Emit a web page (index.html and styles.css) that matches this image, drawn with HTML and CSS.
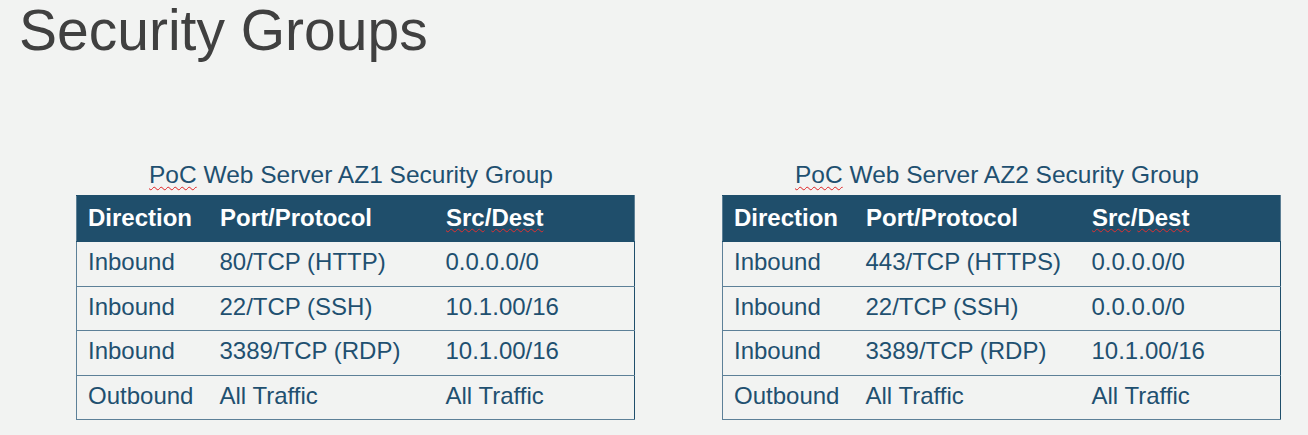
FILE: index.html
```html
<!DOCTYPE html>
<html lang="en">
<head>
<meta charset="utf-8">
<title>Security Groups</title>
<link rel="stylesheet" href="styles.css">
</head>
<body>
<h1 class="title">Security Groups</h1>
<div class="groups">
  <section class="group">
    <div class="caption"><span class="spell">PoC</span> Web Server AZ1 Security Group</div>
    <table class="sg">
      <colgroup><col class="c1"><col class="c2"><col class="c3"></colgroup>
      <thead>
        <tr><th>Direction</th><th>Port/Protocol</th><th><span class="spell">Src</span>/<span class="spell">Dest</span></th></tr>
      </thead>
      <tbody>
        <tr><td>Inbound</td><td>80/TCP (HTTP)</td><td>0.0.0.0/0</td></tr>
        <tr><td>Inbound</td><td>22/TCP (SSH)</td><td>10.1.00/16</td></tr>
        <tr><td>Inbound</td><td>3389/TCP (RDP)</td><td>10.1.00/16</td></tr>
        <tr><td>Outbound</td><td>All Traffic</td><td>All Traffic</td></tr>
      </tbody>
    </table>
  </section>
  <section class="group">
    <div class="caption"><span class="spell">PoC</span> Web Server AZ2 Security Group</div>
    <table class="sg">
      <colgroup><col class="c1"><col class="c2"><col class="c3"></colgroup>
      <thead>
        <tr><th>Direction</th><th>Port/Protocol</th><th><span class="spell">Src</span>/<span class="spell">Dest</span></th></tr>
      </thead>
      <tbody>
        <tr><td>Inbound</td><td>443/TCP (HTTPS)</td><td>0.0.0.0/0</td></tr>
        <tr><td>Inbound</td><td>22/TCP (SSH)</td><td>0.0.0.0/0</td></tr>
        <tr><td>Inbound</td><td>3389/TCP (RDP)</td><td>10.1.00/16</td></tr>
        <tr><td>Outbound</td><td>All Traffic</td><td>All Traffic</td></tr>
      </tbody>
    </table>
  </section>
</div>
</body>
</html>
```
FILE: styles.css
```css
html, body {
  margin: 0;
  padding: 0;
  background: #f2f3f2;
  font-family: "Liberation Sans", Arial, sans-serif;
}
body {
  width: 1308px;
  height: 435px;
  overflow: hidden;
}
.title {
  margin: 2px 0 0 19px;
  font-size: 57px;
  line-height: 56px;
  font-weight: normal;
  color: #404040;
}
.groups {
  display: flex;
  gap: 88px;
  padding-left: 76px;
  margin-top: 105px;
}
.group {
  width: 558px;
}
.caption {
  text-align: center;
  font-size: 24.5px;
  line-height: 24px;
  color: #1f5070;
  margin-bottom: 8px;
  padding-right: 8px;
}
.spell {
  text-decoration: underline wavy #e02020;
  text-decoration-thickness: 1px;
  text-underline-offset: 3px;
  text-decoration-skip-ink: none;
}
.sg {
  width: 558px;
  border-collapse: collapse;
  table-layout: fixed;
  font-size: 24px;
  color: #1f5070;
}
.c1 { width: 132px; }
.c2 { width: 226px; }
.c3 { width: 200px; }
.sg th {
  background: #1f4e6b;
  color: #ffffff;
  font-weight: bold;
  text-align: left;
  height: 44px;
  padding: 0 0 1px 11px;
  border: 1px solid #1f4e6b;
  border-left-color: #5d7f95;
  border-right-color: #5d7f95;
  white-space: nowrap;
}
.sg thead th + th {
  border-left-color: #1f4e6b;
}
.sg thead th:not(:last-child) {
  border-right-color: #1f4e6b;
}
.sg th .spell {
  text-decoration-color: #e03030;
  text-underline-offset: 2px;
}
.sg td {
  height: 40.6px;
  padding: 0 0 3px 11px;
  border-top: 1px solid #5d8098;
  border-bottom: 1px solid #5d8098;
  white-space: nowrap;
}
.sg td:first-child {
  border-left: 1px solid #5d8098;
}
.sg td:last-child {
  border-right: 1px solid #1f4e6b;
}
```
